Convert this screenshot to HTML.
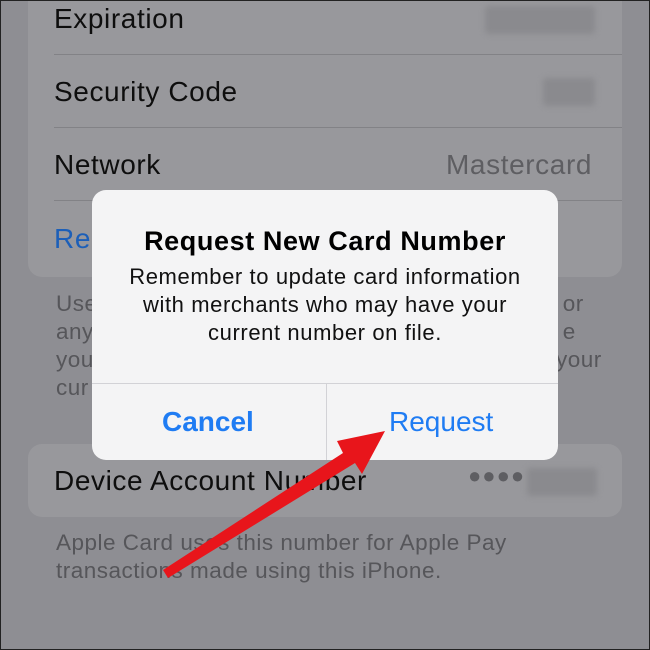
<!DOCTYPE html>
<html><head><style>
body{margin:0;width:650px;height:650px;overflow:hidden;background:#8e8e93;font-family:"Liberation Sans",sans-serif;position:relative}
.frame{position:absolute;inset:0;border:1px solid #222;box-sizing:border-box;z-index:20;pointer-events:none}
.card{position:absolute;left:28px;width:594px;background:#98989c;border-radius:14px}
.row{position:absolute;left:54px;font-size:28px;letter-spacing:0.6px;color:#0e0e0e}
.sep{position:absolute;left:54px;right:28px;height:1px;background:#828286}
.blur{position:absolute;background:#8a8a8e;border-radius:4px;filter:blur(3px)}
.foot{position:absolute;left:56px;font-size:22.5px;letter-spacing:0.5px;color:#56565a;line-height:28px}
.dlg{position:absolute;left:92px;top:190px;width:466px;height:270px;background:#f4f4f5;border-radius:14px;text-align:center;z-index:5}
.dlg h1{margin:0;position:absolute;top:36px;width:100%;font-size:27px;letter-spacing:0.6px;font-weight:bold;color:#000}
.dlg p{margin:0;position:absolute;top:73px;width:100%;font-size:22px;letter-spacing:0.6px;line-height:28px;color:#111}
.btn{position:absolute;top:216px;font-size:28px;color:#1f7cf3}
</style></head><body>
<div class="card" style="top:-20px;height:297px"></div>
<div class="row" style="top:3px">Expiration</div>
<div class="blur" style="left:485px;top:6px;width:110px;height:28px"></div>
<div class="sep" style="top:54px"></div>
<div class="row" style="top:76px">Security Code</div>
<div class="blur" style="left:543px;top:78px;width:52px;height:28px"></div>
<div class="sep" style="top:127px"></div>
<div class="row" style="top:149px">Network</div>
<div class="row" style="top:149px;left:446px;color:#5e5e62">Mastercard</div>
<div class="sep" style="top:200px"></div>
<div class="row" style="top:223px;color:#1c5fb8">Re</div>
<div class="foot" style="top:290px">Use<br>any<br>you<br>cur</div>
<div class="foot" style="top:290px;left:556px">&nbsp;or<br>&nbsp;e<br>your</div>
<div class="card" style="top:444px;height:73px"></div>
<div class="row" style="top:465px">Device Account Number</div>
<div class="row" style="top:463px;left:468px;font-size:22px;color:#5e5e62;letter-spacing:1px">●●●●</div>
<div class="blur" style="left:527px;top:468px;width:70px;height:28px"></div>
<div class="foot" style="top:529px">Apple Card uses this number for Apple Pay<br>transactions made using this iPhone.</div>
<div class="dlg">
<h1>Request New Card Number</h1>
<p>Remember to update card information<br>with merchants who may have your<br>current number on file.</p>
<div style="position:absolute;top:193px;left:0;right:0;height:1px;background:#d2d2d6"></div>
<div style="position:absolute;top:193px;bottom:0;left:234px;width:1px;background:#d2d2d6"></div>
<div class="btn" style="left:70px;font-weight:bold">Cancel</div>
<div class="btn" style="left:297px">Request</div>
</div>
<svg style="position:absolute;left:0;top:0;z-index:10" width="650" height="650">
<polygon points="163,570 343,453 337,441 385,431 362,474 355,463 168,578" fill="#e8151b"/>
</svg>
<div class="frame"></div>
</body></html>
